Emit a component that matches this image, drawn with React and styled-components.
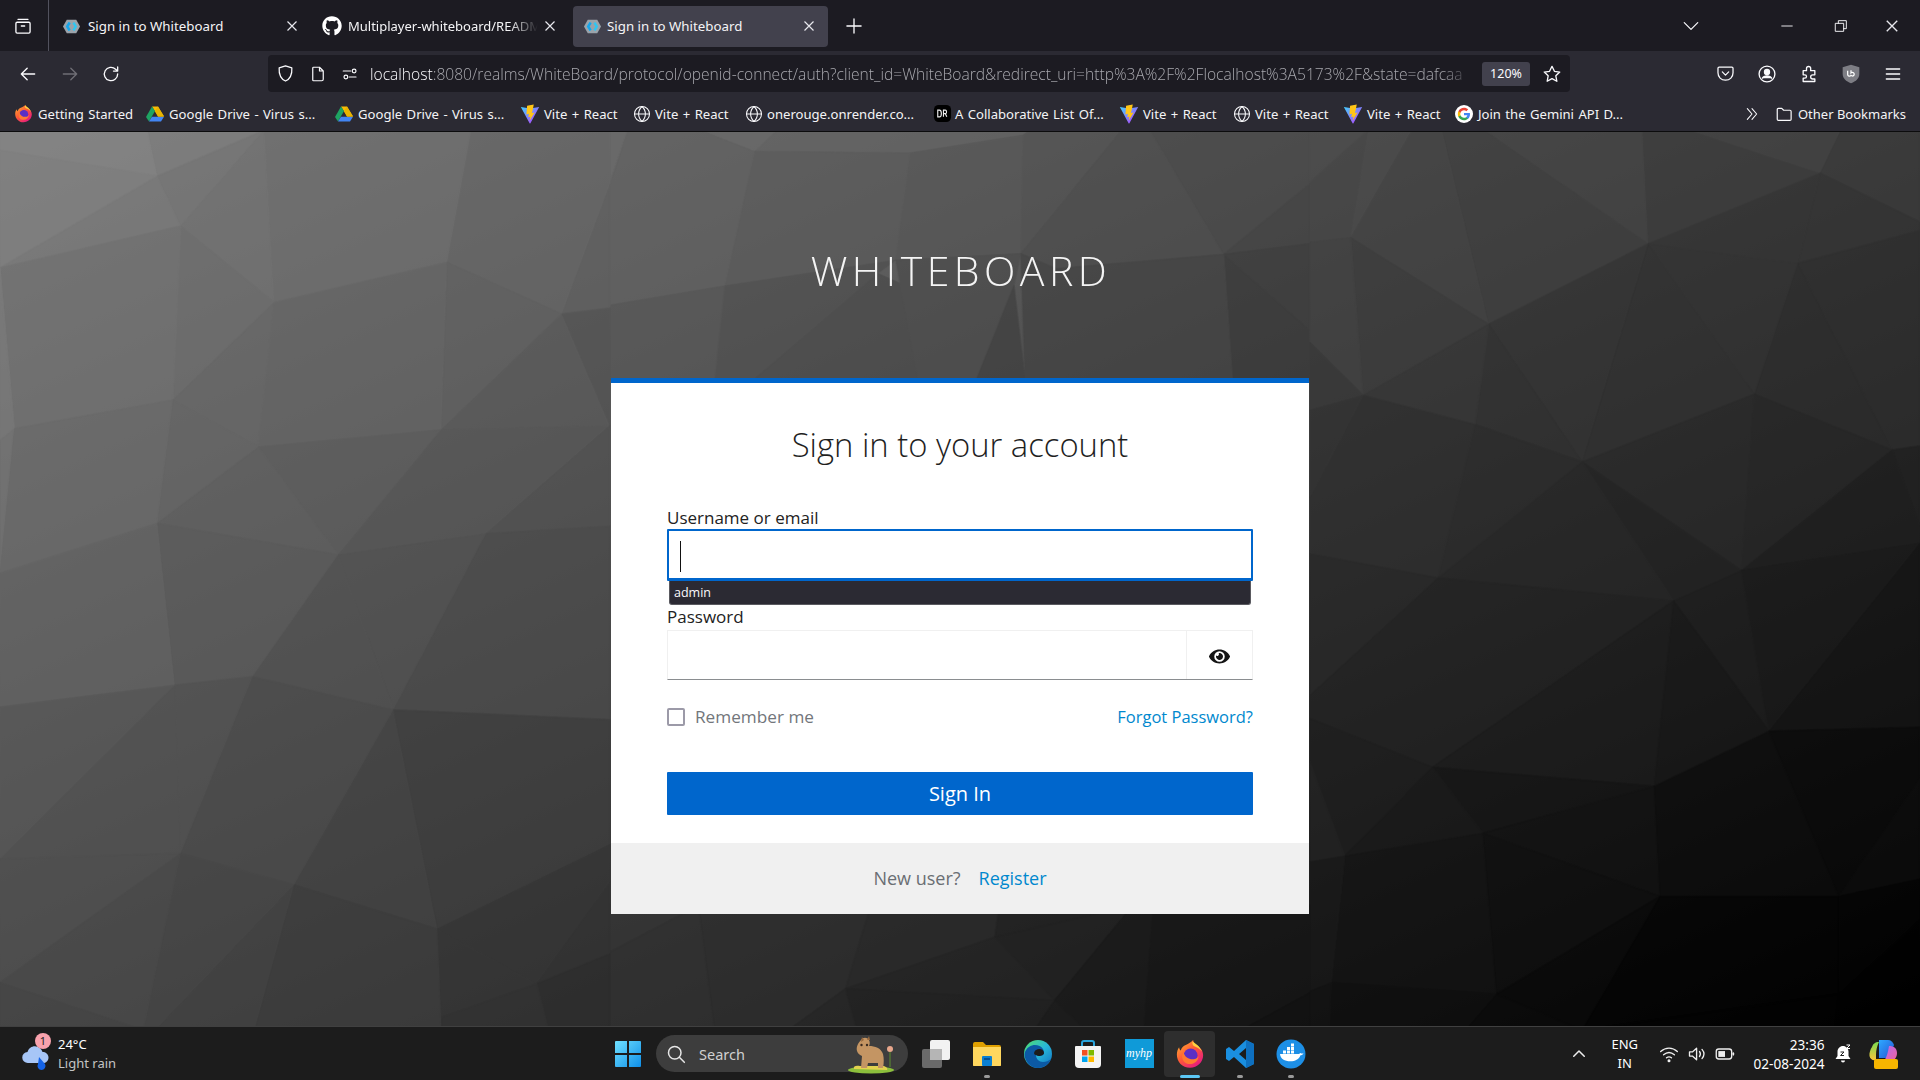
import React from 'react';
import styled, { createGlobalStyle } from 'styled-components';
import { FaGithub, FaEye } from 'react-icons/fa';

const Global = createGlobalStyle`
  html, body { margin: 0; padding: 0; width: 1920px; height: 1080px; overflow: hidden; background: #1c1b22; }
  * { box-sizing: border-box; }
`;

/* ---------- low-poly backdrop ---------- */
const LEFT = [
  ['#838383','0,0 380,0 405,80 0,35'],['#7c7c7c','380,0 680,0 405,80'],['#7f7f7f','0,35 405,80 0,240'],
  ['#787878','405,80 465,167 0,240'],['#747474','405,80 680,0 465,167'],['#707070','680,0 705,300 465,167'],
  ['#6c6c6c','680,0 1212,0 1150,230 705,300'],['#646464','1212,0 1568,0 1568,95 1445,320 1150,230'],
  ['#6c6c6c','465,167 705,300 445,470'],['#707070','0,240 465,167 445,470 37,520'],['#7a7a7a','0,240 37,520 0,540'],
  ['#747474','0,540 37,520 0,772'],['#6a6a6a','37,520 445,470 405,685 0,772'],['#666666','445,470 705,300 665,552'],
  ['#656565','445,470 665,552 405,685'],['#646464','705,300 1150,230 1135,522 665,552'],['#5f5f5f','1150,230 1445,320 1135,522'],
  ['#595959','1445,320 1568,515 1135,522'],['#5e5e5e','1445,320 1568,95 1568,310'],['#525252','1445,320 1568,310 1568,515'],
  ['#5c5c5c','665,552 1135,522 870,740'],['#5f5f5f','405,685 665,552 870,740'],['#565656','1135,522 1568,515 1250,703 870,740'],
  ['#505050','1250,703 1568,515 1568,690'],['#646464','0,772 405,685 450,967 0,1005'],['#5b5b5b','405,685 870,740 650,952 450,967'],
  ['#515151','870,740 1250,703 1012,1010'],['#525252','870,740 1012,1010 650,952'],['#4a4a4a','1250,703 1568,690 1568,1027 1012,1010'],
  ['#595959','0,1005 450,967 0,1270'],['#535353','450,967 650,952 465,1260'],['#535353','0,1270 450,967 465,1260'],
  ['#4c4c4c','650,952 1012,1010 757,1315 465,1260'],['#444444','1012,1010 1125,1392 757,1315'],['#3e3e3e','1012,1010 1568,1027 1568,1245 1125,1392'],
  ['#515151','0,1270 465,1260 0,1485'],['#4c4c4c','465,1260 370,1568 0,1485'],['#484848','465,1260 757,1315 400,1568 370,1568'],
  ['#444444','757,1315 655,1568 400,1568'],['#3e3e3e','757,1315 1125,1392 1135,1568 655,1568'],['#363636','1125,1392 1568,1245 1568,1310 1380,1487'],
  ['#363636','1125,1392 1380,1487 1135,1545'],['#333333','1380,1487 1568,1310 1568,1435'],['#2d2d2d','1380,1487 1568,1435 1568,1568 1410,1568'],
  ['#333333','1135,1545 1380,1487 1410,1568 1135,1568'],['#474747','0,1485 370,1568 0,1568'],
];
const RIGHT = [
  ['#494949','0,0 150,0 0,90'],['#444444','0,90 150,0 105,187 0,195'],['#484848','150,0 262,0 105,187'],['#414141','105,187 262,0 340,0 460,338'],
  ['#3c3c3c','340,0 450,0 870,198 460,338'],['#424242','450,0 855,0 870,198'],['#3a3a3a','855,0 975,0 1312,75 870,198'],['#414141','975,0 1365,0 1312,75'],
  ['#383838','1312,75 1365,0 1568,0 1568,160'],['#323232','870,198 1312,75 1255,232'],['#313131','1312,75 1568,160 1568,175 1255,232'],
  ['#3a3a3a','105,187 460,338 137,462'],['#3f3f3f','0,195 105,187 137,462 0,370'],['#363636','0,370 137,462 0,488'],
  ['#323232','460,338 870,198 700,578'],['#2e2e2e','460,338 700,578 425,513'],['#343434','137,462 460,338 425,513'],
  ['#2e2e2e','870,198 1143,460 700,578'],['#303030','870,198 1255,232 1143,460'],['#2a2a2a','1255,232 1497,557 1143,460'],
  ['#2c2c2c','1255,232 1568,175 1568,550 1497,557'],['#2c2c2c','137,462 425,513 330,780 0,738 0,640'],['#2f2f2f','0,488 137,462 0,640'],
  ['#292929','425,513 700,578 330,780'],['#272727','700,578 1143,460 1110,767'],['#252525','1143,460 1497,557 1110,767'],
  ['#212121','700,578 1110,767 935,820'],['#252525','330,780 700,578 935,820'],['#1f1f1f','1497,557 1568,550 1568,690'],
  ['#1d1d1d','1110,767 1497,557 1568,690 1568,720'],['#262626','0,738 330,780 0,985'],['#202020','330,780 935,820 315,1110 0,1025 0,985'],
  ['#1b1b1b','315,1110 935,820 885,1143'],['#1c1c1c','935,820 1110,767 1180,1047'],['#171717','935,820 1180,1047 885,1143'],
  ['#191919','1110,767 1568,720 1180,1047'],['#131313','1180,1047 1568,720 1568,1040'],['#141414','315,1110 885,1143 445,1225'],
  ['#1c1c1c','0,1025 315,1110 90,1265 0,1100'],['#222222','0,1100 90,1265 0,1275'],['#181818','315,1110 445,1225 90,1265'],
  ['#111111','885,1143 900,1335 445,1225'],['#0c0c0c','885,1143 1180,1047 1360,1335 900,1335'],['#090909','1180,1047 1568,1040 1568,1130 1360,1335'],
  ['#0c0c0c','1360,1335 1568,1130 1568,1305'],['#131313','90,1265 445,1225 480,1505 55,1485'],['#191919','0,1275 90,1265 55,1485 0,1500'],
  ['#0e0e0e','445,1225 900,1335 480,1505'],['#090909','480,1505 900,1335 700,1568'],['#030303','900,1335 1360,1335 1360,1505 700,1568'],
  ['#040404','1360,1335 1568,1305 1568,1375 1360,1505'],['#000000','1360,1505 1568,1375 1568,1568 1350,1568'],['#020202','700,1568 1360,1505 1350,1568'],
  ['#0f0f0f','55,1485 480,1505 400,1568 50,1568'],['#131313','0,1500 55,1485 50,1568 0,1568'],['#0a0a0a','480,1505 700,1568 400,1568'],
];
const TOP = [
  ['#676767','0,0 40,0 0,160'],['#5f5f5f','40,0 205,0 325,63 258,467 0,525 0,160'],['#686868','205,0 375,0 325,63'],
  ['#626262','375,0 940,0 925,15 673,68 325,63'],['#5a5a5a','325,63 673,68 640,390 258,467'],['#565656','673,68 925,15 920,370 640,390'],
  ['#525252','925,15 940,0 1145,0 920,370'],['#4c4c4c','1145,0 1210,0 1375,372 1000,415 920,370'],['#474747','1210,0 1568,0 1568,160 1375,372'],
  ['#424242','1375,372 1568,160 1568,340'],['#3b3b3b','1375,372 1568,340 1568,600'],['#383838','1375,372 1568,600 1568,750 1395,750'],
  ['#555555','0,525 258,467 235,750 0,750'],['#4f4f4f','258,467 640,390 600,430 320,750 235,750'],['#4a4a4a','600,430 650,460 690,750 320,750'],
  ['#4c4c4c','640,390 920,370 905,465 820,750 690,750'],['#424242','920,370 1000,415 1375,372 1395,750 930,750'],['#3f3f3f','905,465 930,750 820,750'],
];
const BOTTOM = [
  ['#363636','0,0 215,0 0,155'],['#313131','0,155 215,0 250,375 0,375'],['#2e2e2e','215,0 590,0 535,250 410,375 250,375'],
  ['#2a2a2a','590,0 870,0 860,95 535,250'],['#252525','535,250 860,95 990,285'],['#222222','860,95 1160,0 1110,100 990,285'],
  ['#222222','870,0 1160,0 860,95'],['#272727','410,375 535,250 560,375'],['#222222','535,250 990,285 945,375 560,375'],
  ['#1c1c1c','990,285 1060,375 945,375'],['#1a1a1a','1160,0 1205,0 1185,375 1060,375 990,285'],['#161616','1205,0 1568,0 1568,245 1395,375 1185,375'],
  ['#111111','1568,245 1568,375 1395,375'],
];
const Poly = ({ items }) => items.map(([fill, points]) => <polygon key={points} fill={fill} stroke={fill} strokeWidth="1.5" points={points} />);

const Backdrop = styled.svg`
  position: absolute;
  inset: 0;
  width: 1920px;
  height: 894px;
`;
const Scenery = () => (
  <Backdrop viewBox="0 0 1920 894">
    <defs>
      <linearGradient id="bgGrad" gradientUnits="userSpaceOnUse" x1="0" y1="0" x2="684" y2="1469">
        <stop offset="0" stopColor="#858585" /><stop offset="1" stopColor="#000" />
      </linearGradient>
    </defs>
    <rect width="1920" height="894" fill="url(#bgGrad)" />
    <g opacity=".72">
      <g transform="translate(610,-2) scale(.4464,.3333)"><Poly items={TOP} /></g>
      <g transform="translate(600,773) scale(.4592,.3333)"><Poly items={BOTTOM} /></g>
      <g transform="translate(0,-2) scale(.389,.574)"><Poly items={LEFT} /></g>
      <g transform="translate(1310,-2) scale(.389,.574)"><Poly items={RIGHT} /></g>
    </g>
  </Backdrop>
);

/* ---------- icons ---------- */
const Ic = styled.svg`
  flex: none;
  display: block;
  width: ${p => p.$s || 16}px;
  height: ${p => p.$s || 16}px;
`;
const Line = ({ s = 18, w = 1.6, c = '#fbfbfe', children }) => (
  <Ic $s={s} viewBox="0 0 24 24" fill="none" stroke={c} strokeWidth={w} strokeLinecap="round" strokeLinejoin="round">{children}</Ic>
);
const Keycloak = () => (
  <Ic $s={19} viewBox="0 0 20 20">
    <path d="M1 10 5 3h10l4 7-4 7H5z" fill="#9aa3ab" />
    <path d="M8 6 5.5 10 8 14M12 6l2.500 4-2.500 4" fill="none" stroke="#2fc6f2" strokeWidth="2.500" />
    <path d="M8 6 5.500 10 8 14" fill="none" stroke="#1aa3e8" strokeWidth="2.500" />
  </Ic>
);
const FoxLogo = ({ s = 19 }) => (
  <Ic $s={s} viewBox="0 0 24 24">
    <defs>
      <linearGradient id="fx" x1="0" y1="0" x2="0.8" y2="1"><stop offset="0" stopColor="#ffbd2e" /><stop offset=".5" stopColor="#ff5a36" /><stop offset="1" stopColor="#e31587" /></linearGradient>
    </defs>
    <path d="M12 23C5.800 23 1.500 18 1.500 12.500c0-2.500.7-4.500 1.800-6 .1 1.200.6 2 1.300 2.600.6-2 2.200-3.600 4-4.300C10.800 3.800 13 2.500 14.500 0.800c.2 2 1.400 3 3 4.200 3 2.100 5 4.500 5 8C22.500 18.500 18 23 12 23z" fill="url(#fx)" />
    <circle cx="12.500" cy="13" r="5.500" fill="#5b2fc4" />
    <path d="M7 11c1 4 5 6 9 5 1.500-.4 2.500-1.500 3-2.500-.5 4-3.500 6.500-7 6.500-4 0-6.500-3-6.300-6.500.1-1 .6-2 1.300-2.500z" fill="#ff7a30" />
    <path d="M14 2c3 2 6 4 7.500 8-2-2.500-4-3.500-6.500-4.500-1-1-1.300-2-1-3.500z" fill="#ffd23f" />
  </Ic>
);
const Drive = () => (
  <Ic $s={18} viewBox="0 0 24 22">
    <path d="M8 1h8l8 13h-8z" fill="#fbbc04" />
    <path d="M8 1 0 15l4 6 8-14z" fill="#1ea362" />
    <path d="M8 14.500h16L20 21H4z" fill="#4285f4" />
    <path d="M16 1l8 13.500h-8L12 7z" fill="#e8b400" />
  </Ic>
);
const Vite = () => (
  <Ic $s={20} viewBox="0 0 24 24">
    <defs><linearGradient id="vt" x1="0" y1="0" x2="1" y2="1"><stop offset="0" stopColor="#41d1ff" /><stop offset="1" stopColor="#bd34fe" /></linearGradient></defs>
    <path d="M1 3.500 12 5.500 23 3.500 12.500 23a.6.6 0 0 1-1 0z" fill="url(#vt)" />
    <path d="M16.500 .5 8.500 2l-.8 10.500 3-.7-.8 4 2.600-.7-1 5 6-10-3.200.6 1.100-4z" fill="#ffc517" />
  </Ic>
);
const Globe = () => (
  <Line s={18} w={1.4}>
    <circle cx="12" cy="12" r="10" /><path d="M2 12h20M12 2c-6 5.500-6 14.500 0 20M12 2c6 5.500 6 14.500 0 20" />
  </Line>
);
const Dr = () => (
  <Ic $s={19} viewBox="0 0 20 20">
    <rect x="1" y="1" width="18" height="18" rx="5" fill="#000" />
    <path d="M5 6.500v7h1.800c1.500 0 2-1 2-3.500s-.5-3.500-2-3.500zM11 13.500v-7h2c1.500 0 1.800 3.500 0 3.700l1.500 3.300M11 10.200h2" fill="none" stroke="#eee" strokeWidth="1.200" />
  </Ic>
);
const GoogleG = () => (
  <Ic $s={18} viewBox="0 0 24 24">
    <circle cx="12" cy="12" r="12" fill="#fff" />
    <path d="M20 12.200c0-.6-.1-1.200-.2-1.700H12v3.200h4.500c-.2 1-.8 1.900-1.700 2.500v2.100h2.700c1.600-1.500 2.500-3.600 2.500-6.100z" fill="#4285f4" />
    <path d="M12 20.300c2.300 0 4.100-.8 5.500-2L14.800 16.200c-.7.500-1.700.8-2.800.8-2.200 0-4-1.500-4.700-3.400H4.500v2.100c1.400 2.800 4.200 4.600 7.500 4.600z" fill="#34a853" />
    <path d="M7.300 13.600c-.4-1-.4-2.200 0-3.200V8.300H4.500c-1 1.800-1 5.600 0 7.400z" fill="#fbbc05" />
    <path d="M12 7c1.200 0 2.300.4 3.200 1.200l2.400-2.400C16.100 4.500 14.200 3.700 12 3.700c-3.300 0-6.100 1.800-7.500 4.600l2.800 2.100C8 8.500 9.800 7 12 7z" fill="#ea4335" />
  </Ic>
);
const CloseX = ({ s = 12 }) => (
  <Ic $s={s} viewBox="0 0 12 12" fill="none" stroke="#e8e8ee" strokeWidth="1.200"><path d="M1.500 1.500l9 9M10.500 1.500l-9 9" /></Ic>
);
const WinLogo = () => (
  <Ic $s={28} viewBox="0 0 28 28">
    <defs><linearGradient id="wn" x1="0" y1="0" x2="1" y2="1"><stop offset="0" stopColor="#6fe0ff" /><stop offset="1" stopColor="#0f8fe8" /></linearGradient></defs>
    <path d="M1 2a1 1 0 0 1 1-1h11v12H1zM15 1h11a1 1 0 0 1 1 1v11H15zM1 15h12v12H2a1 1 0 0 1-1-1zM15 15h12v11a1 1 0 0 1-1 1H15z" fill="url(#wn)" />
  </Ic>
);
const Camel = () => (
  <Ic $s={50} viewBox="0 0 50 40">
    <ellipse cx="23" cy="36" rx="23" ry="3.500" fill="#8cbf3c" />
    <path d="M6 35c-1-3 2-4 6-3l24 0c3 1 4 3 3 4z" fill="#e3d24f" />
    <path d="M13 6c2-3 6-3 8 0 1 2 1 4 0 6 6 0 12 2 14 8 1 4 1 9 0 14h-5v-5H20l-1 5h-6l1-12c-2-1-4-2-5-5-1-4 1-8 4-11z" fill="#c49563" />
    <path d="M14 3l2 3-3 2zM21 2l1 4-3 0z" fill="#9a6a3e" />
    <circle cx="13.500" cy="11" r="1.200" fill="#3a2a20" /><circle cx="19" cy="11" r="1.200" fill="#3a2a20" />
    <path d="M42 33V18" stroke="#5c8f2f" strokeWidth="1" /><circle cx="42" cy="15" r="3" fill="#e8a78c" />
  </Ic>
);
const TaskView = () => (
  <Ic $s={30} viewBox="0 0 30 30">
    <rect x="1" y="10" width="20" height="19" rx="2" fill="#6a6a6a" />
    <rect x="9" y="1" width="20" height="20" rx="2" fill="#f2f2f2" />
    <path d="M9 10h12v11H9z" fill="#b5b5b5" />
  </Ic>
);
const Explorer = () => (
  <Ic $s={30} viewBox="0 0 30 30">
    <path d="M1 5a2 2 0 0 1 2-2h8l3 3h13a2 2 0 0 1 2 2v18a1 1 0 0 1-1 1H2a1 1 0 0 1-1-1z" fill="#e0a000" />
    <path d="M1 8h28v18a1 1 0 0 1-1 1H2a1 1 0 0 1-1-1z" fill="#ffd75e" />
    <rect x="10" y="17" width="10" height="10" rx="1" fill="#0a7fd1" />
    <path d="M12 20h6" stroke="#063f7c" strokeWidth="1.500" />
  </Ic>
);
const Edge = () => (
  <Ic $s={30} viewBox="0 0 30 30">
    <defs>
      <linearGradient id="eg" x1="0" y1="0" x2="1" y2="1"><stop offset="0" stopColor="#52e06a" /><stop offset=".5" stopColor="#28b8d8" /><stop offset="1" stopColor="#0f6fc4" /></linearGradient>
    </defs>
    <circle cx="15" cy="15" r="14" fill="url(#eg)" />
    <path d="M1.500 15C3 8 8.500 6 12 6c6 0 9 4 9 8 0 2-2 3-5 3-2 0-3-1-3-1 0 4 3 7 7 7 3 0 6-1 8-3-2 5-7 9-13 9C8 29 1.500 23 1.500 15z" fill="#0c59a4" />
    <path d="M13 16c-3 0-2-4 0-5 3-2 8-1 8 3 0 2-3 3-5 3-1 0-2-.3-3-1z" fill="#1c1c1c" />
  </Ic>
);
const Store = () => (
  <Ic $s={30} viewBox="0 0 30 30">
    <path d="M9 8V4a2 2 0 0 1 2-2h8a2 2 0 0 1 2 2v4" fill="none" stroke="#2aa5dd" strokeWidth="2" />
    <path d="M3 7h24a1 1 0 0 1 1 1v17a4 4 0 0 1-4 4H6a4 4 0 0 1-4-4V8a1 1 0 0 1 1-1z" fill="#f4f4f4" />
    <rect x="9" y="11" width="5.500" height="5.500" fill="#f25022" /><rect x="15.500" y="11" width="5.500" height="5.500" fill="#7fba00" />
    <rect x="9" y="17.500" width="5.500" height="5.500" fill="#00a4ef" /><rect x="15.500" y="17.500" width="5.500" height="5.500" fill="#ffb900" />
  </Ic>
);
const Code = () => (
  <Ic $s={30} viewBox="0 0 30 30">
    <path d="M21 1l8 4v20l-8 4-12-11-5 4-3-2V10l3-2 5 4zM21 9l-7 6 7 6z" fill="#1a8fe0" fillRule="evenodd" />
    <path d="M21 1l8 4v20l-8 4z" fill="#0e70c0" />
  </Ic>
);
const Whale = () => (
  <Ic $s={30} viewBox="0 0 30 30">
    <circle cx="15" cy="15" r="14.500" fill="#1d8fe6" />
    <path d="M4 15h18c1 0 2-.5 2.500-1 .5.5 2 .8 3 .3-.5 1.500-2 2-3 2-1.500 4-5.500 6-10 6-6 0-10-2.500-10.500-7.300z" fill="#fff" />
    <path d="M7 11.500h3v3H7zM11 11.500h3v3h-3zM15 11.500h3v3h-3zM11 8h3v3h-3zM15 8h3v3h-3zM15 4.500h3v3h-3z" fill="#fff" />
  </Ic>
);
const Bell = () => (
  <Ic $s={20} viewBox="0 0 20 20">
    <path d="M10 2c3 0 5.500 2.500 5.500 5.500V12l2 3h-15l2-3V7.500C4.500 4.500 7 2 10 2z" fill="#fff" />
    <path d="M8 16.500h4a2 2 0 0 1-4 0z" fill="#fff" />
    <path d="M7.500 8h3.500l-3.500 3.500H11" fill="none" stroke="#222" strokeWidth="1" />
    <path d="M13.500 1h3.500l-3.500 3.500h3.500" fill="none" stroke="#fff" strokeWidth="1" />
  </Ic>
);
const Copilot = () => (
  <Ic $s={30} viewBox="0 0 30 30">
    <defs>
      <linearGradient id="c1" x1="0" y1="0" x2="1" y2="1"><stop offset="0" stopColor="#2ea8ff" /><stop offset="1" stopColor="#2455d6" /></linearGradient>
      <linearGradient id="c2" x1="0" y1="0" x2="1" y2="1"><stop offset="0" stopColor="#b36cf0" /><stop offset="1" stopColor="#f1619a" /></linearGradient>
      <linearGradient id="c3" x1="0" y1="0" x2="0" y2="1"><stop offset="0" stopColor="#7ad84f" /><stop offset="1" stopColor="#f9c63c" /></linearGradient>
    </defs>
    <path d="M11 1h9c3 0 5 2 6 5l-5 13H11z" fill="url(#c1)" />
    <path d="M4 8c1-3 3-5 7-5 -2 4-3 8-3 13v5c-3 1-6-1-6.500-4C1 14 2.500 10 4 8z" fill="url(#c3)" />
    <path d="M21 7c5 0 8 2.500 8 7s-3 8-6 8h-7c3-4 4-9 5-15z" fill="url(#c2)" />
    <rect x="6" y="20" width="24" height="10" rx="2" fill="#f7b500" />
  </Ic>
);

/* ---------- browser chrome ---------- */
const Page = styled.div`
  width: 1920px;
  height: 1080px;
  display: flex;
  flex-direction: column;
  font-family: "Noto Sans", "Open Sans", sans-serif;
  overflow: hidden;
`;
const TabStrip = styled.div`
  height: 51px;
  background: #1c1b22;
  display: flex;
  align-items: center;
  color: #fbfbfe;
`;
const ViewTabs = styled.div`
  width: 49px;
  height: 51px;
  display: flex;
  align-items: center;
  padding-left: 13px;
  border-right: 1px solid #52525e;
`;
const TabList = styled.div`
  display: flex;
  align-items: center;
  padding-left: 12px;
  flex: 1;
`;
const Tab = styled.div`
  width: ${p => p.$w}px;
  height: 41px;
  display: flex;
  align-items: center;
  gap: ${p => p.$gap}px;
  padding: 0 ${p => p.$pr}px 0 ${p => p.$pl}px;
  border-radius: 4px;
  background: ${p => (p.$active ? '#42414d' : 'transparent')};
  margin-top: 1px;
`;
const TabTitle = styled.span`
  flex: 1;
  min-width: 0;
  font-size: ${p => (p.$fade ? 13 : 13.3)}px;
  white-space: nowrap;
  overflow: hidden;
  color: #f4f4f6;
  ${p => p.$fade && 'mask-image: linear-gradient(to right, #000 85%, transparent 100%);'}
`;
const NewTab = styled.div`
  margin-left: 16px;
  display: flex;
`;
const WindowControls = styled.div`
  display: flex;
  align-items: center;
  padding-right: 21px;
`;
const ListAll = styled.div`
  margin-right: 42.5px;
`;
const WinBtn = styled.div`
  width: ${p => p.$w || 53}px;
  display: flex;
  justify-content: flex-end;
`;
const ToolBar = styled.div`
  height: 45px;
  background: #2b2a33;
  display: flex;
  align-items: center;
  color: #fbfbfe;
`;
const NavGroup = styled.div`
  width: 268px;
  display: flex;
  align-items: center;
  gap: 21.5px;
  padding-left: 18px;
`;
const UrlBar = styled.div`
  width: 1302px;
  height: 37px;
  border-radius: 4px;
  background: #1c1b22;
  display: flex;
  align-items: center;
  padding: 0 8px 0 8px;
  gap: 14px;
`;
const Url = styled.div`
  flex: 1;
  min-width: 0;
  margin-left: -3px;
  font-family: "Open Sans", sans-serif;
  font-weight: 300;
  font-size: 15.6px;
  white-space: nowrap;
  overflow: hidden;
  color: #a8a8ae;
  mask-image: linear-gradient(to right, #000 97%, transparent 100%);
  b { font-weight: 300; color: #fbfbfe; }
`;
const ZoomBadge = styled.div`
  width: 48px;
  height: 24px;
  flex: none;
  border-radius: 3px;
  background: #42414d;
  display: flex;
  align-items: center;
  justify-content: center;
  font-size: 12.5px;
  color: #fbfbfe;
  margin: 0 -2px 0 -6px;
`;
const ToolIcons = styled.div`
  flex: 1;
  display: flex;
  align-items: center;
  justify-content: flex-end;
  gap: 22px;
  padding-right: 17px;
`;
const Bookmarks = styled.div`
  height: 36px;
  background: #2b2a33;
  border-bottom: 1px solid #0c0c0d;
  display: flex;
  align-items: center;
  padding-left: 14px;
`;
const Bm = styled.div`
  display: flex;
  align-items: center;
  gap: ${p => p.$gap}px;
  width: ${p => p.$w}px;
  flex: none;
  font-size: 13.1px;
  word-spacing: 1px;
  white-space: nowrap;
  color: #f4f4f6;
`;
const BmRight = styled.div`
  margin-left: auto;
  display: flex;
  align-items: center;
  gap: 5px;
  font-size: 13px;
  color: #f4f4f6;
  padding-right: 14px;
  svg:first-child { margin-right: 10px; }
`;

/* ---------- login page ---------- */
const Main = styled.main`
  position: relative;
  flex: 1;
  min-height: 0;
  display: flex;
  flex-direction: column;
  align-items: center;
  overflow: hidden;
`;
const Brand = styled.h1`
  position: relative;
  margin: 111px 0 0;
  height: 135px;
  padding-left: 2px;
  font-family: "Open Sans", sans-serif;
  font-weight: 300;
  font-size: 41px;
  line-height: 54px;
  letter-spacing: 4.5px;
  color: #f4f4f4;
`;
const Card = styled.section`
  position: relative;
  width: 698px;
  background: #fff;
  border-top: 5px solid #06c;
  font-family: "Open Sans", sans-serif;
`;
const CardBody = styled.div`
  padding: 39px 56px 28px;
`;
const Title = styled.h2`
  margin: 0 0 40px;
  text-align: center;
  font-weight: 300;
  font-size: 32.8px;
  line-height: 45px;
  color: #1f1f1f;
`;
const Label = styled.label`
  display: block;
  font-size: 17px;
  line-height: 22px;
  font-weight: 400;
  color: #222;
`;
const FocusField = styled.div`
  position: relative;
  height: 52px;
  margin-bottom: 25px;
  border: 2px solid #06c;
  border-bottom-width: 3px;
  border-radius: 1px;
  padding: 10px 11px;
`;
const Caret = styled.div`
  width: 1px;
  height: 31px;
  background: #111;
`;
const Suggest = styled.div`
  position: absolute;
  left: 0;
  right: 0;
  top: 50px;
  height: 24px;
  background: #2b2a33;
  border: 1px solid #5a5a60;
  border-top: 0;
  border-radius: 0 0 3px 3px;
  font-size: 12.5px;
  line-height: 23px;
  padding-left: 4px;
  color: #fbfbfe;
`;
const PasswordField = styled.div`
  height: 50px;
  margin-top: 2px;
  border: 1px solid #f0f0f0;
  border-bottom: 1px solid #8a8d90;
  display: flex;
`;
const EyeButton = styled.div`
  width: 66px;
  margin-left: auto;
  border-left: 1px solid #f0f0f0;
  display: flex;
  align-items: center;
  justify-content: center;
  padding-top: 2px;
  color: #151515;
`;
const OptionRow = styled.div`
  display: flex;
  align-items: center;
  justify-content: space-between;
  margin-top: 24.5px;
  height: 24px;
`;
const Remember = styled.div`
  display: flex;
  align-items: center;
  gap: 10px;
  font-size: 17.2px;
  color: #72767b;
`;
const Box = styled.div`
  width: 18px;
  height: 18px;
  border: 2px solid #9c9aa8;
  border-radius: 2px;
`;
const Link = styled.a`
  font-size: 16.5px;
  color: #0088ce;
  text-decoration: none;
`;
const SignIn = styled.div`
  margin-top: 43px;
  height: 43px;
  background: #06c;
  border-radius: 1px;
  color: #fff;
  font-size: 20px;
  display: flex;
  align-items: center;
  justify-content: center;
`;
const CardFoot = styled.div`
  height: 71px;
  background: #f0f0f0;
  display: flex;
  align-items: center;
  justify-content: center;
  gap: 18px;
  font-size: 18px;
  color: #6a6e73;
  ${Link} { font-size: 18px; }
`;

/* ---------- taskbar ---------- */
const Taskbar = styled.footer`
  height: 54px;
  background: #1c1c1c;
  border-top: 1px solid #404040;
  display: grid;
  grid-template-columns: 614px auto 1fr;
  align-items: center;
  color: #fff;
  font-family: "Noto Sans", "Open Sans", sans-serif;
`;
const Weather = styled.div`
  display: flex;
  align-items: center;
  gap: 7px;
  padding-left: 21px;
`;
const CloudWrap = styled.div`
  position: relative;
  width: 30px;
  height: 26px;
`;
const Badge = styled.div`
  position: absolute;
  left: 14px;
  top: -8px;
  width: 16px;
  height: 16px;
  border-radius: 50%;
  background: #f9a2ad;
  color: #222;
  font-size: 11px;
  line-height: 16px;
  text-align: center;
`;
const TwoLine = styled.div`
  font-size: 13px;
  line-height: 19px;
  span { display: block; }
`;
const LangBlock = styled(TwoLine)`
  margin-left: 23px;
  text-align: center;
`;
const Clock = styled(TwoLine)`
  font-size: 13.6px;
  text-align: right;
`;
const Dim = styled.span`
  color: #c4c4c4;
`;
const Center = styled.div`
  display: flex;
  align-items: center;
  height: 53px;
`;
const SearchPill = styled.div`
  width: 252px;
  height: 37px;
  margin: 0 3px 0 14px;
  border-radius: 19px;
  background: #3d3d3d;
  display: flex;
  align-items: center;
  padding: 0 10px 0 10px;
  gap: 13px;
  font-size: 14.5px;
  color: #d0d0d0;
  svg:last-child { margin-left: auto; }
`;
const TaskItem = styled.div`
  position: relative;
  width: 50.7px;
  height: 46px;
  display: flex;
  align-items: center;
  justify-content: center;
  border-radius: 4px;
  background: ${p => (p.$active ? '#2e2e2e' : 'transparent')};
`;
const Dot = styled.div`
  position: absolute;
  bottom: -1px;
  left: 50%;
  transform: translateX(-50%);
  width: ${p => (p.$active ? 20 : 6)}px;
  height: 3px;
  border-radius: 2px;
  background: ${p => (p.$active ? '#5cc8f5' : '#9a9a9a')};
`;
const Hp = styled.div`
  width: 29px;
  height: 29px;
  background: #0f9ad8;
  color: #fff;
  font-family: "Liberation Serif", serif;
  font-style: italic;
  font-size: 12px;
  display: flex;
  align-items: center;
  justify-content: center;
`;
const Tray = styled.div`
  display: flex;
  align-items: center;
  justify-content: flex-end;
  padding-right: 22px;
`;
const TrayIcons = styled.div`
  display: flex;
  align-items: center;
  gap: 8px;
  margin: 0 18.5px 0 21px;
`;
const BellSlot = styled.div`
  display: flex;
  margin: 0 15.5px 0 8px;
`;

const marks = [
  [<FoxLogo />, 'Getting Started', 132, 5],
  [<Drive />, 'Google Drive - Virus s...', 189, 5],
  [<Drive />, 'Google Drive - Virus s...', 185, 5],
  [<Vite />, 'Vite + React', 113, 4],
  [<Globe />, 'Vite + React', 112, 4],
  [<Globe />, 'onerouge.onrender.co...', 188, 4],
  [<Dr />, 'A Collaborative List Of...', 186, 3],
  [<Vite />, 'Vite + React', 114, 4],
  [<Globe />, 'Vite + React', 110, 4],
  [<Vite />, 'Vite + React', 112, 4],
  [<GoogleG />, 'Join the Gemini API D...', 200, 5],
];

export default function App() {
  return (
    <Page>
      <Global />
      <TabStrip>
        <ViewTabs>
          <Line s={20}><path d="M6 4h12M3.500 9a1.500 1.500 0 0 1 1.500-1.500h14A1.500 1.500 0 0 1 20.500 9v10a1.500 1.500 0 0 1-1.500 1.500H5A1.500 1.500 0 0 1 3.500 19zM10 12h4" /></Line>
        </ViewTabs>
        <TabList>
          <Tab $w={249} $pl={1} $pr={12} $gap={7}>
            <Keycloak /><TabTitle>Sign in to Whiteboard</TabTitle><CloseX />
          </Tab>
          <Tab $w={263} $pl={12} $pr={17} $gap={6}>
            <Ic as={FaGithub} $s={20} color="#fff" /><TabTitle $fade>Multiplayer-whiteboard/README</TabTitle><CloseX />
          </Tab>
          <Tab $w={255} $active $pl={10} $pr={13} $gap={5}>
            <Keycloak /><TabTitle>Sign in to Whiteboard</TabTitle><CloseX />
          </Tab>
          <NewTab><Line s={20}><path d="M12 3.500v17M3.500 12h17" /></Line></NewTab>
        </TabList>
        <WindowControls>
          <ListAll><Line s={18}><path d="M3 7.500l9 9 9-9" /></Line></ListAll>
          <WinBtn><Line s={18} w={1.200}><path d="M5 12h14" /></Line></WinBtn>
          <WinBtn><Line s={16} w={1.400}><path d="M4 8h12v12H4zM8 8V4h12v12h-4" /></Line></WinBtn>
          <WinBtn $w={50.5}><CloseX s={14} /></WinBtn>
        </WindowControls>
      </TabStrip>

      <ToolBar>
        <NavGroup>
          <Line s={20}><path d="M20 12H4M11 5l-7 7 7 7" /></Line>
          <Line s={20} c="#6f6e75"><path d="M4 12h16M13 5l7 7-7 7" /></Line>
          <Line s={20}><path d="M20 12a8 8 0 1 1-2.500-5.800L20 8.500M20 3.500v5h-5" /></Line>
        </NavGroup>
        <UrlBar>
          <Line s={19}><path d="M12 2.500l8 2.500c.5 8-1.500 13.500-8 16.500C5.500 18.500 3.500 13 4 5z" /></Line>
          <Line s={18}><path d="M6 3h8l5 5v11a2 2 0 0 1-2 2H6a1 1 0 0 1-1-1V4a1 1 0 0 1 1-1zM14 3v5h5" /></Line>
          <Line s={18}><path d="M3 8h10M20 16h-9" /><circle cx="17.500" cy="8" r="2.500" /><circle cx="6.500" cy="16" r="2.500" /></Line>
          <Url><b>localhost</b>:8080/realms/WhiteBoard/protocol/openid-connect/auth?client_id=WhiteBoard&amp;redirect_uri=http%3A%2F%2Flocalhost%3A5173%2F&amp;state=dafcaa</Url>
          <ZoomBadge>120%</ZoomBadge>
          <Line s={20}><path d="M12 2.800l2.900 6 6.400.9-4.700 4.500 1.200 6.500-5.800-3.200-5.800 3.200 1.200-6.500L2.700 9.700l6.400-.9z" /></Line>
        </UrlBar>
        <ToolIcons>
          <Line s={19}><path d="M4 4h16a1.500 1.500 0 0 1 1.500 1.500V11c0 5.500-4 9.500-9.500 9.500S2.500 16.500 2.500 11V5.500A1.500 1.500 0 0 1 4 4zM8 10l4 4 4-4" /></Line>
          <Line s={20}><circle cx="12" cy="12" r="9.500" /><circle cx="12" cy="9.500" r="3" fill="#fbfbfe" /><path d="M6.500 17c1-2 3-2.800 5.500-2.800s4.500.8 5.500 2.800" fill="#fbfbfe" /></Line>
          <Line s={20}><path d="M5 8h4V5.500a2.500 2.500 0 0 1 5 0V8h5v5h-2.500a2.500 2.500 0 0 0 0 5H19v3H5v-4h2a2 2 0 0 0 0-4H5z" /></Line>
          <Ic $s={20} viewBox="0 0 24 24"><path d="M12 1l10 3v8c0 5-4 9-10 11C6 21 2 17 2 12V4z" fill="#7d7d84" /><path d="M8 8v4.500a2.200 2.200 0 0 0 4 1.200 2.200 2.200 0 1 0 0-3V7.500M8 8v4" fill="none" stroke="#fff" strokeWidth="1.500" /></Ic>
          <Line s={20}><path d="M4 6h16M4 12h16M4 18h16" /></Line>
        </ToolIcons>
      </ToolBar>

      <Bookmarks>
        {marks.map(([icon, label, w, gap], i) => (
          <Bm key={i} $w={w} $gap={gap}>{icon}<span>{label}</span></Bm>
        ))}
        <BmRight>
          <Line s={16}><path d="M5 4l7 8-7 8M12 4l7 8-7 8" /></Line>
          <Line s={18}><path d="M3 6a1.500 1.500 0 0 1 1.500-1.500h4.500l2.500 2.500H20a1.500 1.500 0 0 1 1.500 1.500V19A1.500 1.500 0 0 1 20 20.500H4.500A1.500 1.500 0 0 1 3 19z" /></Line>
          <span>Other Bookmarks</span>
        </BmRight>
      </Bookmarks>

      <Main>
        <Scenery />
        <Brand>WHITEBOARD</Brand>
        <Card>
          <CardBody>
            <Title>Sign in to your account</Title>
            <Label>Username or email</Label>
            <FocusField>
              <Caret />
              <Suggest>admin</Suggest>
            </FocusField>
            <Label>Password</Label>
            <PasswordField>
              <EyeButton><FaEye size={21} /></EyeButton>
            </PasswordField>
            <OptionRow>
              <Remember><Box />Remember me</Remember>
              <Link>Forgot Password?</Link>
            </OptionRow>
            <SignIn>Sign In</SignIn>
          </CardBody>
          <CardFoot>New user? <Link>Register</Link></CardFoot>
        </Card>
      </Main>

      <Taskbar>
        <Weather>
          <CloudWrap>
            <Ic $s={30} viewBox="0 0 30 26">
              <path d="M7 20a5.500 5.500 0 0 1-.5-11C8 4 13 2 17 4c3 1.500 4 3.500 4.500 5 3 0 6 2 6 5.500S25 20 22 20z" fill="#a7c6f7" />
              <path d="M18 14l6 7a4 4 0 1 1-7 0z" fill="#1463e8" />
            </Ic>
            <Badge>1</Badge>
          </CloudWrap>
          <TwoLine><span>24°C</span><Dim>Light rain</Dim></TwoLine>
        </Weather>
        <Center>
          <WinLogo />
          <SearchPill>
            <Line s={20} c="#e6e6e6" w={1.800}><circle cx="10.500" cy="10.500" r="7.500" /><path d="M16 16l6 6" /></Line>
            <span>Search</span>
            <Camel />
          </SearchPill>
          <TaskItem><TaskView /></TaskItem>
          <TaskItem><Explorer /><Dot /></TaskItem>
          <TaskItem><Edge /></TaskItem>
          <TaskItem><Store /></TaskItem>
          <TaskItem><Hp>myhp</Hp></TaskItem>
          <TaskItem $active><FoxLogo s={30} /><Dot $active /></TaskItem>
          <TaskItem><Code /><Dot /></TaskItem>
          <TaskItem><Whale /><Dot /></TaskItem>
        </Center>
        <Tray>
          <Line s={18} c="#eee" w={2}><path d="M5 15l7-7 7 7" /></Line>
          <LangBlock><span>ENG</span><span>IN</span></LangBlock>
          <TrayIcons>
            <Line s={20} c="#eee"><path d="M2 9c6-5.500 14-5.500 20 0M5.500 13c4-3.500 9-3.500 13 0M9 16.500c2-1.500 4-1.500 6 0" /><circle cx="12" cy="20" r="1" fill="#eee" /></Line>
            <Line s={20} c="#eee"><path d="M3 9.500v5h3.500l5 4.500V5L6.500 9.500zM15 9c1.500 2 1.500 4 0 6M18 6.500c3 3.500 3 7.500 0 11" /></Line>
            <Ic $s={20} viewBox="0 0 24 24"><rect x="1.500" y="6" width="18.500" height="12" rx="3" fill="none" stroke="#eee" strokeWidth="1.600" /><rect x="4" y="8.500" width="8" height="7" fill="#eee" /><rect x="21" y="10" width="2" height="4" rx="1" fill="#eee" /></Ic>
          </TrayIcons>
          <Clock><span>23:36</span><span>02-08-2024</span></Clock>
          <BellSlot><Bell /></BellSlot>
          <Copilot />
        </Tray>
      </Taskbar>
    </Page>
  );
}
